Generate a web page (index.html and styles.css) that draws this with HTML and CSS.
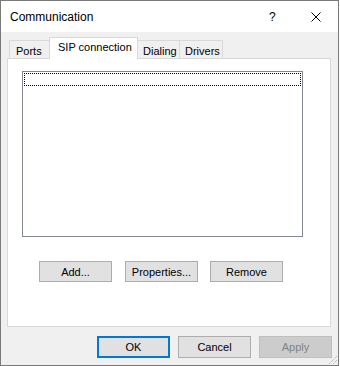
FILE: index.html
```html
<!DOCTYPE html>
<html>
	<head>
		<meta charset="utf-8">
		<title>Communication</title>
		<link rel="stylesheet" href="styles.css">
	</head>
	<body>
		<div class="window">
			<header class="titlebar">
				<span class="caption">Communication</span>
				<span class="help">?</span>
				<span class="close">
					<svg width="10" height="10" viewBox="0 0 10 10">
						<path d="M0.5 0.5 L9.5 9.5 M9.5 0.5 L0.5 9.5" stroke="#000" stroke-width="1" fill="none"/>
					</svg>
				</span>
			</header>

			<div class="content">
				<nav class="tabs">
					<div class="tab tab-ports">Ports</div>
					<div class="tab tab-sip active">SIP connection</div>
					<div class="tab tab-dial">Dialing</div>
					<div class="tab tab-drv">Drivers</div>
				</nav>

				<section class="panel">
					<div class="listbox">
						<div class="focus-row"></div>
					</div>
					<div class="actions">
						<button class="btn">Add...</button>
						<button class="btn">Properties...</button>
						<button class="btn btn-last">Remove</button>
					</div>
				</section>

				<footer class="footer">
					<button class="btn btn-default">OK</button>
					<button class="btn">Cancel</button>
					<button class="btn" disabled>Apply</button>
				</footer>
			</div>

			<!--resize grip-->
			<svg class="grip" width="12" height="12" viewBox="0 0 12 12">
				<path d="M11 3 L3 11 M11 7 L7 11" stroke="#a8a8a8" stroke-width="1" stroke-dasharray="1 1" fill="none"/>
			</svg>
		</div>
	</body>
</html>
```

FILE: styles.css
```css
body,html{
	margin: 0;
	background: #ffffff;
}
.window{
	position: relative;
	box-sizing: border-box;
	width: 339px;
	height: 366px;
	border: 1px solid #7a7a7a;
	background: #f0f0f0;
	font-family: "Liberation Sans", Arial, sans-serif;
	color: #000;
}
.titlebar{
	display: flex;
	align-items: center;
	height: 31px;
	background: #ffffff;
	padding-left: 9px;
}
.caption{
	font-size: 12px;
	flex: 1;
}
.help{
	font-size: 12px;
	width: 12px;
	margin-right: 30px;
}
.close{
	display: flex;
	width: 10px;
	height: 10px;
	margin-right: 17px;
}
.content{
	padding: 6px 6px 0 6px;
}
.tabs{
	display: flex;
	align-items: flex-end;
	height: 20px;
	padding-left: 2px;
	font-size: 11px;
}
.tab{
	box-sizing: border-box;
	height: 18px;
	border: 1px solid #d9d9d9;
	border-bottom: none;
	background: #f0f0f0;
	padding: 4px 0 0 6px;
	margin-left: -1px;
}
.tab:first-child{
	margin-left: 0;
}
.tab-ports{ width: 41px; }
.tab-sip{ width: 89px; }
.tab-dial{ width: 43px; padding-left: 5px; }
.tab-drv{ width: 44px; padding-left: 5px; }
.tab.active{
	position: relative;
	height: 22px;
	background: #ffffff;
	padding: 3px 0 0 8px;
	margin-bottom: -1px;
	z-index: 2;
}
.panel{
	box-sizing: border-box;
	width: 324px;
	height: 269px;
	border: 1px solid #d9d9d9;
	background: #ffffff;
	padding: 12px 0 0 14px;
}
.listbox{
	box-sizing: border-box;
	width: 281px;
	height: 166px;
	border: 1px solid #828790;
	padding: 1px;
}
.focus-row{
	height: 13px;
	border: 1px dotted #000;
	box-sizing: border-box;
}
.actions{
	display: flex;
	gap: 13px;
	margin: 24px 0 0 17px;
}
.btn-last{
	margin-left: -1px;
}
.btn{
	box-sizing: border-box;
	width: 73px;
	height: 21px;
	padding: 0;
	border: 1px solid #adadad;
	background: #e1e1e1;
	font: 11px "Liberation Sans", Arial, sans-serif;
	color: #000;
}
.footer{
	display: flex;
	justify-content: flex-end;
	gap: 8px;
	margin-top: 9px;
}
.footer .btn{
	height: 22px;
}
.btn-default{
	border: 2px solid #0078d7;
}
.btn:disabled{
	background: #cccccc;
	border-color: #bfbfbf;
	color: #838383;
}
.grip{
	position: absolute;
	right: 0;
	bottom: 0;
}
```
